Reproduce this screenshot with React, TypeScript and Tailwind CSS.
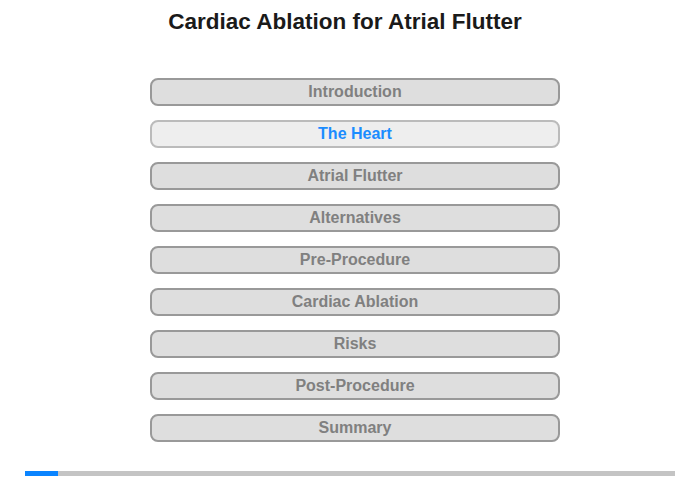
import React from "react";

const items = [
  "Introduction",
  "The Heart",
  "Atrial Flutter",
  "Alternatives",
  "Pre-Procedure",
  "Cardiac Ablation",
  "Risks",
  "Post-Procedure",
  "Summary",
];

export default function App() {
  return (
    <div
      className="w-[700px] h-[480px] bg-white flex flex-col"
      style={{ fontFamily: '"Liberation Sans", Arial, sans-serif' }}
    >
      <h1 className="text-center text-[22.5px] font-bold text-[#1a1a1a] pt-[9px] leading-[26px] pr-[10px]">
        Cardiac Ablation for Atrial Flutter
      </h1>
      <div className="flex flex-col items-center gap-[14px] mt-[43px]">
        {items.map((t) => {
          const active = t === "The Heart";
          return (
            <div
              key={t}
              className={
                active
                  ? "w-[410px] h-[28px] rounded-[8px] border-2 border-[#bbbbbb] bg-[#eeeeee] flex items-center justify-center text-[16px] font-bold text-[#1a8cff] ml-[10px]"
                  : "w-[410px] h-[28px] rounded-[8px] border-2 border-[#999999] bg-[#dedede] flex items-center justify-center text-[16px] font-bold text-[#808080] ml-[10px]"
              }
            >
              {t}
            </div>
          );
        })}
      </div>
      <div className="mt-[29px] mx-[25px] h-[5px] bg-[#c4c4c4] flex">
        <div className="w-[33px] h-full bg-[#0a84ff]" />
      </div>
    </div>
  );
}
